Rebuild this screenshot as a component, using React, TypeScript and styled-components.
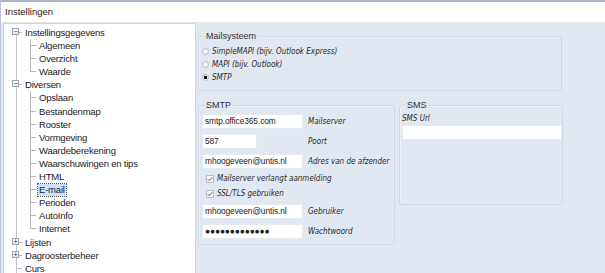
import styled, { createGlobalStyle } from 'styled-components';

const GlobalStyle = createGlobalStyle`
  html, body { margin: 0; padding: 0; background: #ffffff; }
  body { width: 605px; height: 273px; overflow: hidden; }
`;

const Window = styled.div`
  width: 605px;
  height: 273px;
  box-sizing: border-box;
  border-top: 2px solid #a9b4ca;
  border-left: 1px solid #bcc5d6;
  display: flex;
  flex-direction: column;
  overflow: hidden;
  font-family: "Liberation Sans", Arial, sans-serif;
  color: #1b1b1b;
`;

const TitleBar = styled.div`
  height: 20px;
  flex: none;
  background: #fffffb;
  border-bottom: 1px solid #dfe4ec;
  padding-left: 4px;
  font-size: 9.5px;
  line-height: 20px;
`;

const Body = styled.div`
  flex: 1;
  display: flex;
  min-height: 0;
  background: #e2e8f1;
`;

const TreePanel = styled.div`
  width: 193px;
  flex: none;
  margin-left: 2px;
  box-sizing: border-box;
  background: #ffffff;
  border: 1px solid #cdd5e1;
  border-bottom: none;
  padding-top: 2px;
  position: relative;
  &::before {
    content: '';
    position: absolute;
    left: 12px;
    top: 9px;
    bottom: 0;
    border-left: 1px solid #c4c4c4;
  }
`;

const Row = styled.div<{ $level: number; $last?: boolean }>`
  position: relative;
  height: 13.1px;
  line-height: 13.1px;
  font-size: 9.5px;
  letter-spacing: -0.2px;
  white-space: nowrap;
  padding-left: ${p => (p.$level ? 34 : 20)}px;
  &::before {
    content: '';
    position: absolute;
    top: 6px;
    left: ${p => (p.$level ? 26 : 12)}px;
    width: 6px;
    border-top: 1px solid #b8b8b8;
  }
  &::after {
    content: '';
    position: absolute;
    top: 0;
    left: 26px;
    height: ${p => (p.$last ? '6px' : '13.1px')};
    border-left: 1px solid #b8b8b8;
    display: ${p => (p.$level ? 'block' : 'none')};
  }
`;

const Expander = styled.span`
  position: absolute;
  left: 8px;
  top: 2px;
  width: 7px;
  height: 7px;
  box-sizing: border-box;
  border: 1px solid #9da4ae;
  background: linear-gradient(#ffffff, #e4e6ea);
  z-index: 1;
  display: flex;
  align-items: center;
  justify-content: center;
  font-size: 7px;
  line-height: 5px;
  letter-spacing: 0;
  color: #333;
`;

const Label = styled.span<{ $selected?: boolean }>`
  display: inline-block;
  padding: 0 1px;
  line-height: 12px;
  background: ${p => (p.$selected ? '#cfe1f6' : 'transparent')};
  outline: ${p => (p.$selected ? '1px dotted #555' : 'none')};
  color: ${p => (p.$selected ? '#0f1f3a' : 'inherit')};
`;

const Content = styled.div`
  flex: 1;
  padding: 13px 0 0 2px;
  display: flex;
  flex-direction: column;
  font-size: 9px;
  color: #2a2a2a;
`;

const GroupBox = styled.div<{ $w: number; $h: number }>`
  width: ${p => p.$w}px;
  height: ${p => p.$h}px;
  box-sizing: border-box;
  border: 1px solid #d1d8e2;
  border-radius: 3px;
  box-shadow: inset 1px 1px 0 #edf1f6;
  padding: 0 0 0 3px;
  display: flex;
  flex-direction: column;
`;

const Legend = styled.div`
  margin: -6px 0 0 2px;
  padding: 0 2px;
  align-self: flex-start;
  background: #e2e8f1;
  line-height: 11px;
  font-size: 9px;
  color: #333;
`;

const Italic = styled.span`
  font-family: "DejaVu Sans Condensed", "DejaVu Sans", sans-serif;
  font-style: italic;
  font-size: 8px;
  white-space: nowrap;
  color: #2a2a2a;
`;

const RadioRow = styled.div`
  display: flex;
  align-items: center;
  height: 13px;
  gap: 3px;
`;

const Radio = styled.span<{ $on?: boolean }>`
  width: 7px;
  height: 7px;
  border-radius: 50%;
  box-sizing: border-box;
  border: 1px solid #b9bec6;
  background: radial-gradient(circle, ${p => (p.$on ? '#111 0 1.6px, #f5f5f5 2px' : '#fafafa 0, #eaeaea 100%')});
`;

const Columns = styled.div`
  display: flex;
  gap: 4px;
  margin-top: 14px;
`;

const FieldRow = styled.div`
  display: flex;
  align-items: center;
  gap: 5px;
  height: 20px;
`;

const Input = styled.div<{ $w: number }>`
  width: ${p => p.$w}px;
  height: 15px;
  flex: none;
  box-sizing: border-box;
  background: #ffffff;
  border: 1px solid #e6ebf1;
  padding-left: 2px;
  font-size: 8.4px;
  letter-spacing: -0.1px;
  line-height: 13px;
  color: #222;
  white-space: nowrap;
  overflow: hidden;
`;

const CheckRow = styled.div`
  display: flex;
  align-items: center;
  gap: 3px;
  height: 15px;
  padding-left: 4px;
`;

const Check = styled.span`
  width: 8px;
  height: 8px;
  box-sizing: border-box;
  border: 1px solid #b9bec6;
  background: #f7f7f7;
  display: flex;
  align-items: center;
  justify-content: center;
`;

const SmsLabel = styled(Italic)`
  display: block;
  margin: 2px 0 1px -1px;
  line-height: 11px;
`;

const tree: { text: string; level: number; open?: boolean; closed?: boolean; last?: boolean; selected?: boolean }[] = [
  { text: 'Instellingsgegevens', level: 0, open: true },
  { text: 'Algemeen', level: 1 },
  { text: 'Overzicht', level: 1 },
  { text: 'Waarde', level: 1, last: true },
  { text: 'Diversen', level: 0, open: true },
  { text: 'Opslaan', level: 1 },
  { text: 'Bestandenmap', level: 1 },
  { text: 'Rooster', level: 1 },
  { text: 'Vormgeving', level: 1 },
  { text: 'Waardeberekening', level: 1 },
  { text: 'Waarschuwingen en tips', level: 1 },
  { text: 'HTML', level: 1 },
  { text: 'E-mail', level: 1, selected: true },
  { text: 'Perioden', level: 1 },
  { text: 'AutoInfo', level: 1 },
  { text: 'Internet', level: 1, last: true },
  { text: 'Lijsten', level: 0, closed: true },
  { text: 'Dagroosterbeheer', level: 0, closed: true },
  { text: 'Curs', level: 0 },
];

function CheckMark() {
  return (
    <svg width="6" height="6" viewBox="0 0 6 6">
      <path d="M0.8 3.2 L2.3 4.7 L5.2 1.2" fill="none" stroke="#555" strokeWidth="0.9" />
    </svg>
  );
}

export default function App() {
  return (
    <>
      <GlobalStyle />
      <Window>
        <TitleBar>Instellingen</TitleBar>
        <Body>
          <TreePanel>
            {tree.map(item => (
              <Row key={item.text} $level={item.level} $last={item.last}>
                {(item.open || item.closed) && <Expander>{item.open ? '−' : '+'}</Expander>}
                <Label $selected={item.selected}>{item.text}</Label>
              </Row>
            ))}
          </TreePanel>
          <Content>
            <GroupBox $w={364} $h={55}>
              <Legend>Mailsysteem</Legend>
              <div style={{ height: 3 }} />
              <RadioRow><Radio /><Italic>SimpleMAPI (bijv. Outlook Express)</Italic></RadioRow>
              <RadioRow><Radio /><Italic>MAPI (bijv. Outlook)</Italic></RadioRow>
              <RadioRow><Radio $on /><Italic>SMTP</Italic></RadioRow>
            </GroupBox>
            <Columns>
              <GroupBox $w={197} $h={140}>
                <Legend>SMTP</Legend>
                <FieldRow><Input $w={101}>smtp.office365.com</Input><Italic>Mailserver</Italic></FieldRow>
                <FieldRow><Input $w={55}>587</Input><Italic style={{ marginLeft: 46 }}>Poort</Italic></FieldRow>
                <FieldRow><Input $w={101}>mhoogeveen@untis.nl</Input><Italic>Adres van de afzender</Italic></FieldRow>
                <CheckRow><Check><CheckMark /></Check><Italic>Mailserver verlangt aanmelding</Italic></CheckRow>
                <CheckRow><Check><CheckMark /></Check><Italic>SSL/TLS gebruiken</Italic></CheckRow>
                <FieldRow><Input $w={101}>mhoogeveen@untis.nl</Input><Italic>Gebruiker</Italic></FieldRow>
                <FieldRow><Input $w={101}>●●●●●●●●●●●●●</Input><Italic>Wachtwoord</Italic></FieldRow>
              </GroupBox>
              <GroupBox $w={164} $h={100}>
                <Legend>SMS</Legend>
                <SmsLabel>SMS Url</SmsLabel>
                <Input $w={160} style={{ marginLeft: -1 }} />
              </GroupBox>
            </Columns>
          </Content>
        </Body>
      </Window>
    </>
  );
}
